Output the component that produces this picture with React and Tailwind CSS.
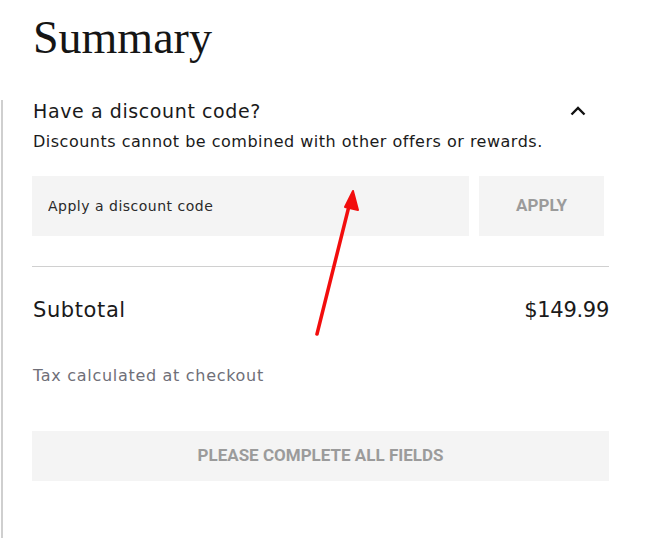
import { useState } from "react";

function ChevronUp() {
  return (
    <svg width="16" height="10" viewBox="0 0 16 10" fill="none">
      <path d="M1.5 8.5L8 2l6.5 6.5" stroke="#111" strokeWidth="2.4" />
    </svg>
  );
}

function Arrow() {
  return (
    <svg
      className="absolute left-0 top-0 pointer-events-none"
      width="645"
      height="538"
      viewBox="0 0 645 538"
    >
      <line x1="317" y1="334" x2="349" y2="206" stroke="#f20d0d" strokeWidth="3.5" strokeLinecap="round" />
      <path d="M353 191L358 210L345 207Z" fill="#f20d0d" stroke="#f20d0d" strokeWidth="2" strokeLinejoin="round" />
    </svg>
  );
}

const btnFont = { fontFamily: 'Roboto, "DejaVu Sans", sans-serif' };

export default function App() {
  const [code, setCode] = useState("");

  return (
    <div
      className="relative w-[645px] h-[538px] bg-white text-[#1a1a1a] overflow-hidden"
      style={{ fontFamily: '"DejaVu Sans", "Open Sans", sans-serif' }}
    >
      <h1
        className="pl-[33px] pt-[12px] h-[100px] text-[46px] leading-[52px] text-[#151515]"
        style={{ fontFamily: '"Liberation Serif", serif' }}
      >
        Summary
      </h1>

      <div className="ml-px border-l-2 border-[#cfcfcf] h-[438px] pl-[29px] w-[608px]">
        <div className="flex items-center justify-between pl-px pr-[23px] h-[22px]">
          <span className="text-[19px] leading-none tracking-[0.6px]">Have a discount code?</span>
          <ChevronUp />
        </div>
        <p className="mt-[8px] pl-px text-[16px] leading-[24px] tracking-[0.5px]">
          Discounts cannot be combined with other offers or rewards.
        </p>

        <div className="flex gap-[10px] mt-[22px] pr-[5px] h-[60px]">
          <input
            value={code}
            onChange={(e) => setCode(e.target.value)}
            placeholder="Apply a discount code"
            className="flex-1 bg-[#f4f4f4] px-[16px] text-[14px] tracking-[0.5px] outline-none placeholder:text-[#2a2a2a]"
          />
          <button
            className="w-[125px] bg-[#f4f4f4] text-[17px] font-bold text-[#9b9b9b]"
            style={btnFont}
          >
            APPLY
          </button>
        </div>

        <div className="mt-[30px] border-t border-[#d0d0d0]" />

        <div className="flex items-center justify-between mt-[29px] pl-px h-[30px]">
          <span className="text-[21px] tracking-[0.6px]">Subtotal</span>
          <span className="text-[21px] tracking-[-0.3px]">$149.99</span>
        </div>

        <p className="mt-[38px] pl-px text-[16px] tracking-[0.7px] text-[#6f6f78]">Tax calculated at checkout</p>

        <button
          className="mt-[43px] w-full h-[50px] bg-[#f4f4f4] text-[17px] font-bold text-[#9b9b9b]"
          style={btnFont}
        >
          PLEASE COMPLETE ALL FIELDS
        </button>
      </div>

      <Arrow />
    </div>
  );
}
